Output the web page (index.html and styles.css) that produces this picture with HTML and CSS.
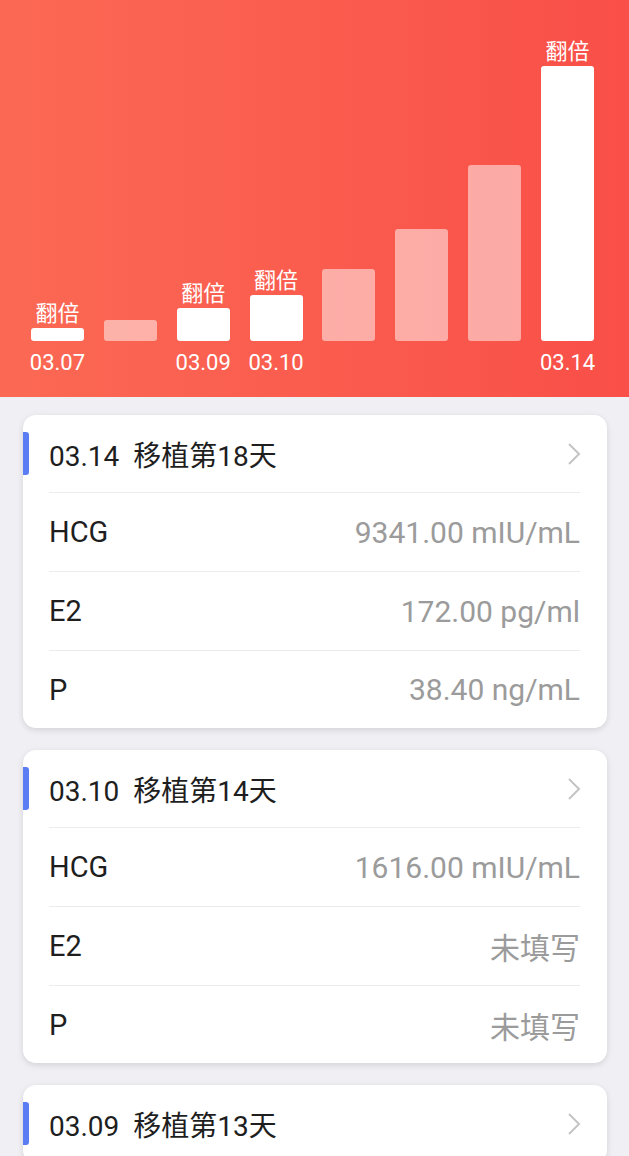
FILE: index.html
```html
<!DOCTYPE html>
<html lang="zh-CN">
<head>
    <meta charset="UTF-8">
    <meta name="viewport" content="width=device-width, initial-scale=1.0">
    <title>HCG 记录</title>
    <link rel="stylesheet" href="styles.css">
</head>
<body>
    <div class="header">
        <div class="chart">
            <div class="col">
                <div class="tag">翻倍</div>
                <div class="bar" style="height: 13px"></div>
                <div class="date">03.07</div>
            </div>
            <div class="col">
                <div class="tag"></div>
                <div class="bar light" style="height: 21px"></div>
                <div class="date"></div>
            </div>
            <div class="col">
                <div class="tag">翻倍</div>
                <div class="bar" style="height: 33px"></div>
                <div class="date">03.09</div>
            </div>
            <div class="col">
                <div class="tag">翻倍</div>
                <div class="bar" style="height: 46px"></div>
                <div class="date">03.10</div>
            </div>
            <div class="col">
                <div class="tag"></div>
                <div class="bar light" style="height: 72px"></div>
                <div class="date"></div>
            </div>
            <div class="col">
                <div class="tag"></div>
                <div class="bar light" style="height: 112px"></div>
                <div class="date"></div>
            </div>
            <div class="col">
                <div class="tag"></div>
                <div class="bar light" style="height: 176px"></div>
                <div class="date"></div>
            </div>
            <div class="col">
                <div class="tag">翻倍</div>
                <div class="bar" style="height: 275px"></div>
                <div class="date">03.14</div>
            </div>
        </div>
    </div>

    <div class="list">
        <div class="card">
            <div class="card-head">
                <span class="title">03.14&nbsp;&nbsp;移植第18天</span>
                <svg class="arrow" width="14" height="24" viewBox="0 0 14 24"><polyline points="2,2 12,12 2,22" fill="none" stroke="#c4c4c4" stroke-width="2"/></svg>
            </div>
            <div class="row"><span class="name">HCG</span><span class="value">9341.00 mIU/mL</span></div>
            <div class="row"><span class="name">E2</span><span class="value">172.00 pg/ml</span></div>
            <div class="row"><span class="name">P</span><span class="value">38.40 ng/mL</span></div>
        </div>

        <div class="card">
            <div class="card-head">
                <span class="title">03.10&nbsp;&nbsp;移植第14天</span>
                <svg class="arrow" width="14" height="24" viewBox="0 0 14 24"><polyline points="2,2 12,12 2,22" fill="none" stroke="#c4c4c4" stroke-width="2"/></svg>
            </div>
            <div class="row"><span class="name">HCG</span><span class="value">1616.00 mIU/mL</span></div>
            <div class="row"><span class="name">E2</span><span class="value">未填写</span></div>
            <div class="row"><span class="name">P</span><span class="value">未填写</span></div>
        </div>

        <div class="card">
            <div class="card-head">
                <span class="title">03.09&nbsp;&nbsp;移植第13天</span>
                <svg class="arrow" width="14" height="24" viewBox="0 0 14 24"><polyline points="2,2 12,12 2,22" fill="none" stroke="#c4c4c4" stroke-width="2"/></svg>
            </div>
        </div>
    </div>
</body>
</html>
```

FILE: styles.css
```css
body {
    margin: 0;
    padding: 0;
    background: #efeff4;
    font-family: Roboto, "Noto Sans CJK SC", sans-serif;
    overflow: hidden;
}

.header {
    height: 397px;
    background: linear-gradient(90deg, #fb6954, #f94f48);
    display: flex;
    align-items: flex-end;
    box-sizing: border-box;
    padding: 0 25px 22px 21px;
}

.chart {
    flex: 1;
    display: flex;
    align-items: flex-end;
}

.col {
    flex: 1;
    display: flex;
    flex-direction: column;
    align-items: center;
}

.tag {
    font-size: 22px;
    line-height: 26px;
    color: #fff;
    margin-bottom: 1px;
}

.bar {
    width: 53px;
    background: #fff;
    border-radius: 3px;
}

.bar.light {
    background: rgba(255, 255, 255, 0.5);
}

.date {
    height: 24px;
    margin-top: 10px;
    font-size: 22px;
    line-height: 24px;
    color: #fff;
}

.list {
    padding: 18px 22px 0 23px;
}

.card {
    background: #fff;
    border-radius: 13px;
    box-shadow: 0 2px 6px rgba(0, 0, 0, 0.12);
    padding: 0 27px 0 26px;
    margin-bottom: 22px;
}

.card-head {
    position: relative;
    height: 77px;
    display: flex;
    align-items: center;
    justify-content: space-between;
    border-bottom: 1px solid #ececec;
}

.card-head::before {
    content: "";
    position: absolute;
    left: -26px;
    top: 17px;
    width: 6px;
    height: 43px;
    background: #5b7df4;
    border-radius: 0 3px 3px 0;
}

.title {
    font-size: 28px;
    color: #1e1e1e;
}

.arrow {
    margin-right: -1px;
}

.row {
    height: 78px;
    display: flex;
    align-items: center;
    justify-content: space-between;
    border-bottom: 1px solid #ececec;
}

.row:last-child {
    height: 77px;
    border-bottom: none;
}

.name {
    font-size: 29px;
    color: #1e1e1e;
}

.value {
    font-size: 30px;
    color: #9b9b9b;
}
```
